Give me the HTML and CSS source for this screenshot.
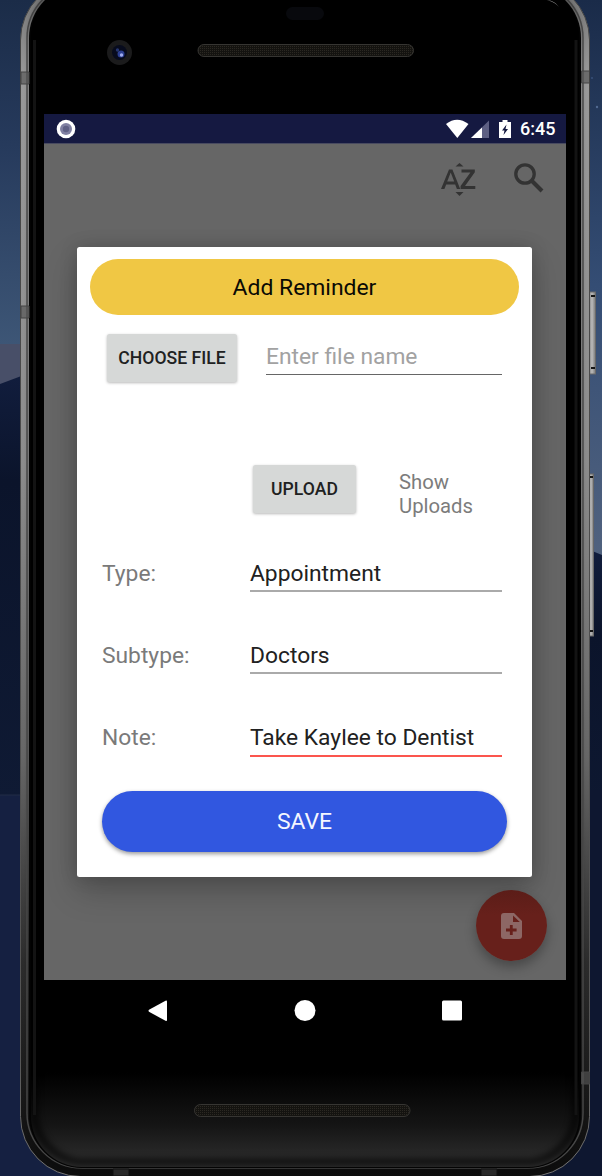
FILE: index.html
```html
<!DOCTYPE html>
<html lang="en">
<head>
<meta charset="utf-8">
<title>Add Reminder</title>
<link rel="stylesheet" href="styles.css">
</head>
<body>
<div class="desktop">
  <svg class="backdrop" width="602" height="1176" viewBox="0 0 602 1176" aria-hidden="true">
    <defs>
      <linearGradient id="sky" x1="0" y1="0" x2="0" y2="1"><stop offset="0" stop-color="#1b2c48"/><stop offset=".4" stop-color="#263a5c"/><stop offset="1" stop-color="#3f5878"/></linearGradient>
      <linearGradient id="skyRight" x1="0" y1="0" x2="0" y2="1"><stop offset="0" stop-color="#1a2b49"/><stop offset=".5" stop-color="#344d74"/><stop offset="1" stop-color="#52637f"/></linearGradient>
      <linearGradient id="duneShade" x1="0" y1="0" x2="0" y2="1"><stop offset="0" stop-color="#111d3d"/><stop offset=".25" stop-color="#0b142b"/><stop offset="1" stop-color="#0f1a34"/></linearGradient>
      <linearGradient id="rim" x1="0" y1="0" x2="0" y2="1"><stop offset="0" stop-color="#707070"/><stop offset=".08" stop-color="#999"/><stop offset=".4" stop-color="#8c8c8c"/><stop offset=".65" stop-color="#666"/><stop offset=".82" stop-color="#2c2c2c"/><stop offset="1" stop-color="#0c0c0c"/></linearGradient>
      <linearGradient id="rimEdge" x1="0" y1="0" x2="0" y2="1"><stop offset="0" stop-color="#444"/><stop offset=".9" stop-color="#555"/><stop offset="1" stop-color="#777"/></linearGradient>
      <linearGradient id="rimBottom" x1="0" y1="0" x2="1" y2="0"><stop offset="0" stop-color="#707070" stop-opacity="0"/><stop offset=".1" stop-color="#606060"/><stop offset=".9" stop-color="#606060"/><stop offset="1" stop-color="#707070" stop-opacity="0"/></linearGradient>
      <linearGradient id="glass" x1="0" y1="0" x2="0" y2="1"><stop offset="0" stop-color="#000"/><stop offset=".92" stop-color="#000"/><stop offset=".965" stop-color="#151515"/><stop offset="1" stop-color="#303030"/></linearGradient>
      <linearGradient id="key" x1="0" y1="0" x2="1" y2="0"><stop offset="0" stop-color="#777"/><stop offset=".5" stop-color="#bbb"/><stop offset="1" stop-color="#777"/></linearGradient>
      <pattern id="mesh" width="2" height="2" patternUnits="userSpaceOnUse"><rect width="2" height="2" fill="#141310"/><rect width="1" height="1" fill="#2b2822"/></pattern>
      <filter id="soft" x="-10%" y="-10%" width="120%" height="120%"><feGaussianBlur stdDeviation="3"/></filter>
    </defs>
    <rect width="301" height="360" fill="url(#sky)"/>
    <rect x="301" width="301" height="570" fill="url(#skyRight)"/>
    <rect y="344" width="24" height="50" fill="#484f68"/>
    <path d="M0 384L24 375V800H0z" fill="url(#duneShade)"/>
    <path d="M580 546L602 555V900H580z" fill="url(#duneShade)"/>
    <rect y="795" width="100" height="381" fill="#152041"/>
    <rect x="530" y="790" width="72" height="386" fill="#0e1730"/>
    <path d="M0 795h24" stroke="#222c47"/>
    <circle cx="592" cy="78" r="1" fill="#38517a"/><circle cx="597" cy="107" r="1.200" fill="#526a91"/>

    <rect x="588.500" y="292" width="7" height="82" fill="url(#key)" stroke="#686868"/>
    <path d="M591 296h4M591 368h4" stroke="#151515" stroke-width="2"/>
    <rect x="588.500" y="474" width="5" height="162" fill="url(#key)" stroke="#686868"/>
    <path d="M590 477h3M590 631h3" stroke="#151515" stroke-width="2"/>

    <rect x="20.500" y="-20" width="569" height="1196.500" rx="60" fill="url(#rim)" stroke="url(#rimEdge)"/>
    <rect x="27" y="-17" width="556" height="1185" rx="55" fill="none" stroke="#4c4c4c" stroke-width="1.500"/>
    <path d="M52 1173H558" stroke="url(#rimBottom)" stroke-width="5"/>
    <rect x="29" y="-15" width="552" height="1183" rx="53" fill="#050505"/>
    <rect x="31" y="-15" width="548" height="1182" rx="51" fill="url(#glass)"/>
    <rect x="34.500" y="-14" width="541" height="1176" rx="50" fill="none" stroke="#000" stroke-width="7" filter="url(#soft)" opacity=".65"/>
    <path d="M34.500 40V1115M576 40V1115" stroke="#131313" stroke-width="3"/>
    <path d="M547 0q8 1 12 7q-4-5-12-7z" fill="#aaa"/>
    <g fill="#555" fill-opacity=".65" stroke="#444" stroke-width="1"><path d="M21 72h8v12h-8zM21 306h8v12h-8zM581.500 71h8v12h-8zM581.500 1072h8v12h-8z"/></g>
    <path d="M113 1169h16v7h-16zM481 1169h16v7h-16z" fill="#292929" stroke="#111"/>

    <rect x="286" y="7" width="38" height="13" rx="6.500" fill="#08090d"/>
    <circle cx="119.500" cy="52.500" r="12.500" fill="#1b1b1c"/>
    <circle cx="119.500" cy="52.500" r="7.500" fill="#070b1d"/>
    <circle cx="117.500" cy="50" r="1.700" fill="#26366f"/><circle cx="121" cy="54" r="3.500" fill="#2c3f92"/><circle cx="121.500" cy="55" r="1.700" fill="#a0acef"/>
    <rect x="198" y="44.500" width="215.500" height="12" rx="6" fill="url(#mesh)" stroke="#363532"/>
    <rect x="194.500" y="1104.500" width="215.500" height="12" rx="6" fill="url(#mesh)" stroke="#363532"/>
  </svg>

  <main class="screen">
    <header class="status">
      <svg class="record" width="20" height="20" viewBox="0 0 20 20"><circle cx="10" cy="10" r="9.300" fill="#fff"/><circle cx="10" cy="10" r="6" fill="#8080a2"/><circle cx="10" cy="10" r="3.200" fill="#5f6085"/></svg>
      <svg class="signals" width="66" height="20" viewBox="0 0 66 20">
        <path d="M0 5Q11-3.500 22.500 5L11.300 19z" fill="#fff"/>
        <path d="M43 1.500V19H25z" fill="#5d5f83"/><path d="M36 8.500V19H25z" fill="#fff"/>
        <path d="M56.500 1h5v2H65v16H53V3h3.500z" fill="#fff"/><path d="M60.500 5.500L56 11.500h2.500L57.500 16l4.500-6h-2.500l1-4.500z" fill="#151941"/>
      </svg>
      <span class="clock">6:45</span>
    </header>
    <section class="app">
      <div class="toolbar">
        <svg class="sort" width="35" height="34" viewBox="0 0 35 34" fill="#333">
          <path d="M14.500 3.500L18.500 0l4 3.500zM14.500 29l4 4 4-4z"/>
          <path fill-rule="evenodd" d="M8 6.500h3.400L19.200 26h-3.300l-1.700-4.600H5.200L3.400 26H0zM6.200 18.600h7L9.700 9.600zM20.500 6.500h13.300v2.700L24 23.100h10.300V26H19.600v-2.900L29.400 9.400h-8.900z"/>
        </svg>
        <svg width="30" height="30" viewBox="0 0 30 30" fill="none" stroke="#333"><circle cx="11" cy="11" r="9.200" stroke-width="3.300"/><path d="M17.500 17.500L28 28" stroke-width="4"/></svg>
      </div>
      <form class="dialog">
        <h1 class="title">Add Reminder</h1>
        <div class="row file-row">
          <button type="button" class="btn choose">CHOOSE FILE</button>
          <span class="line hint">Enter file name</span>
        </div>
        <div class="row upload-row">
          <button type="button" class="btn upload">UPLOAD</button>
          <span class="show">Show<br>Uploads</span>
        </div>
        <div class="fields">
          <label class="field"><span class="name">Type:</span><span class="line">Appointment</span></label>
          <label class="field"><span class="name">Subtype:</span><span class="line">Doctors</span></label>
          <label class="field"><span class="name">Note:</span><span class="line focused">Take Kaylee to Dentist</span></label>
        </div>
        <button type="button" class="save">SAVE</button>
      </form>
      <div class="fab">
        <svg width="22" height="26" viewBox="0 0 22 26"><path d="M3 0h10l8 8v15q0 3-3 3H3q-3 0-3-3V3q0-3 3-3z" fill="#8d6765"/><path d="M12 2.500V9h6.800z" fill="#67201b"/><path d="M10.300 12v10M5 17h10.600" stroke="#67201b" stroke-width="2.800"/></svg>
      </div>
    </section>
    <nav class="nav">
      <svg width="20" height="22" viewBox="0 0 20 22"><path d="M17.500 .7Q19 0 19 1.500v18.500q0 1.500-1.500.8L1 11.800q-1-1 0-2z" fill="#fff"/></svg>
      <svg width="22" height="22" viewBox="0 0 22 22"><circle cx="11" cy="10.500" r="10.500" fill="#fff"/></svg>
      <svg width="20" height="22" viewBox="0 0 20 22"><rect y=".5" width="20" height="20" rx="1.500" fill="#fff"/></svg>
    </nav>
  </main>
</div>
</body>
</html>
```

FILE: styles.css
```css
* { box-sizing: border-box; }
body { margin: 0; font-family: Roboto, sans-serif; }
.desktop { position: relative; width: 602px; height: 1176px; overflow: hidden; padding: 114px 36px 0 44px; background: #111a35; }
.backdrop { position: absolute; left: 0; top: 0; }
.screen { position: relative; width: 522px; }
svg { display: block; }
.status { display: flex; align-items: center; height: 29px; padding: 0 10px 0 12px; background: #151941; }
.signals { margin-left: auto; }
.clock { margin-left: 8px; width: 36px; color: #fff; font-size: 18px; font-weight: 500; line-height: 29px; white-space: nowrap; }
.app { display: flex; flex-direction: column; height: 837px; background: #666; border-top: 1px solid #484a60; overflow: hidden; }
.toolbar { display: flex; justify-content: flex-end; align-items: flex-start; gap: 38px; height: 103px; padding: 19px 22px 0 0; flex: none; }
.dialog { display: flex; flex-direction: column; width: 455px; height: 630px; flex: none; margin: 0 0 0 33px; padding: 12px 13px 0 13px; background: #fff; border-radius: 2.500px; box-shadow: 0 14px 32px rgba(0,0,0,.22), 0 0 18px rgba(0,0,0,.16); }
.title { margin: 0; height: 56px; border-radius: 28px; background: #f0c744; color: #0b0a04; font-size: 22.900px; font-weight: 400; line-height: 58px; text-align: center; }
.row { display: flex; align-items: flex-start; }
.btn { height: 48px; flex: none; padding: 0; border: 0; border-radius: 2.500px; background: #d6d8d7; box-shadow: 0 1px 3px rgba(0,0,0,.28); color: #202121; font: 500 17.600px/47px Roboto, sans-serif; text-align: center; }
.file-row { margin-top: 19px; padding-left: 17px; gap: 29px; }
.choose { width: 130px; }
.line { height: 41px; border-bottom: 2px solid #aaa; color: #212121; font-size: 22.800px; line-height: 45px; white-space: nowrap; }
.file-row .line { width: 236px; border-bottom: 1px solid #666; line-height: 46px; }
.file-row .hint { color: #a2a2a2; }
.upload-row { margin-top: 83px; padding-left: 163px; gap: 43px; }
.upload { width: 103px; }
.show { padding-top: 5px; color: #7c7c7c; font-size: 20.300px; line-height: 24px; }
.fields { margin-top: 33px; padding-left: 12px; }
.field { display: flex; height: 82px; }
.name { width: 148px; color: #7a7a7a; font-size: 22.800px; line-height: 45px; }
.field .line { width: 252px; }
.field .focused { border-bottom: 2px solid #fb554d; height: 42px; }
.save { width: 405px; height: 61px; flex: none; margin: -6px 0 0 12px; padding: 0; border: 0; border-radius: 31px; background: #3157e0; box-shadow: 0 2px 4px rgba(0,0,0,.4); color: #f4f6ff; font: 400 22.900px/62px Roboto, sans-serif; }
.fab { display: flex; align-items: center; justify-content: center; flex: none; width: 71px; height: 71px; margin: 13px 0 0 432px; border-radius: 50%; background: linear-gradient(#5b1d18, #67201b 35%); box-shadow: 0 6px 12px rgba(0,0,0,.3); }
.nav { display: flex; justify-content: space-between; padding: 20px 104px 0; }
```
